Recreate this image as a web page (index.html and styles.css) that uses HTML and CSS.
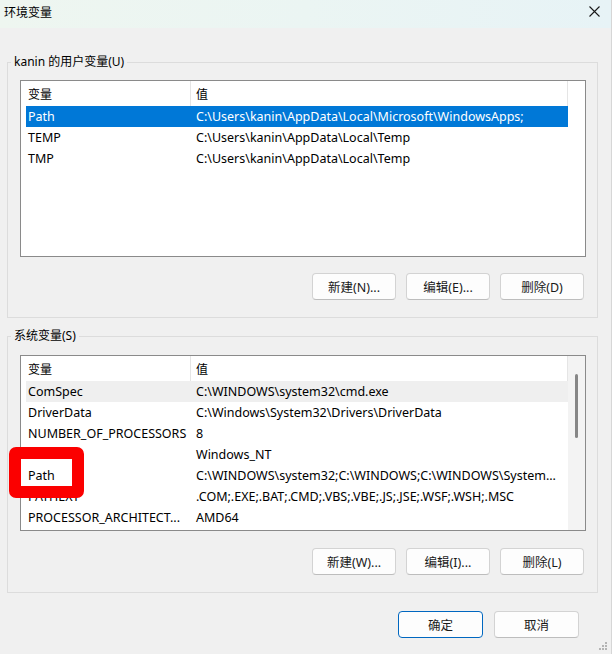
FILE: index.html
```html
<!DOCTYPE html>
<html lang="zh-CN">
<head>
    <meta charset="UTF-8">
    <meta name="viewport" content="width=device-width, initial-scale=1.0">
    <title>环境变量</title>
    <link rel="stylesheet" href="styles.css">
</head>
<body>
    <div class="window">
        <div class="titlebar">
            <span class="title">环境变量</span>
            <svg class="close" width="11" height="11" viewBox="0 0 11 11">
                <path d="M0.5 0.5L10.5 10.5M10.5 0.5L0.5 10.5" stroke="#1a1a1a" stroke-width="1.1" fill="none"/>
            </svg>
        </div>

        <div class="content">
            <fieldset class="group">
                <legend>kanin 的用户变量(U)</legend>
                <div class="listview">
                    <div class="list-inner">
                        <div class="row head"><div class="name">变量</div><div class="value">值</div></div>
                        <div class="row selected"><div class="name">Path</div><div class="value">C:\Users\kanin\AppData\Local\Microsoft\WindowsApps;</div></div>
                        <div class="row"><div class="name">TEMP</div><div class="value">C:\Users\kanin\AppData\Local\Temp</div></div>
                        <div class="row"><div class="name">TMP</div><div class="value">C:\Users\kanin\AppData\Local\Temp</div></div>
                    </div>
                    <div class="gutter"></div>
                </div>
                <div class="actions">
                    <button class="btn">新建(N)...</button>
                    <button class="btn">编辑(E)...</button>
                    <button class="btn">删除(D)</button>
                </div>
            </fieldset>

            <fieldset class="group system">
                <legend>系统变量(S)</legend>
                <div class="listview">
                    <div class="list-inner">
                        <div class="row head"><div class="name">变量</div><div class="value">值</div></div>
                        <div class="row hover"><div class="name">ComSpec</div><div class="value">C:\WINDOWS\system32\cmd.exe</div></div>
                        <div class="row"><div class="name">DriverData</div><div class="value">C:\Windows\System32\Drivers\DriverData</div></div>
                        <div class="row"><div class="name">NUMBER_OF_PROCESSORS</div><div class="value">8</div></div>
                        <div class="row"><div class="name">OS</div><div class="value">Windows_NT</div></div>
                        <div class="row"><div class="name">Path</div><div class="value">C:\WINDOWS\system32;C:\WINDOWS;C:\WINDOWS\System...</div></div>
                        <div class="row"><div class="name">PATHEXT</div><div class="value">.COM;.EXE;.BAT;.CMD;.VBS;.VBE;.JS;.JSE;.WSF;.WSH;.MSC</div></div>
                        <div class="row"><div class="name">PROCESSOR_ARCHITECT...</div><div class="value">AMD64</div></div>
                    </div>
                    <div class="gutter scrollbar"><div class="thumb"></div></div>
                </div>
                <div class="actions">
                    <button class="btn">新建(W)...</button>
                    <button class="btn">编辑(I)...</button>
                    <button class="btn">删除(L)</button>
                </div>
            </fieldset>
        </div>

        <div class="footer">
            <button class="btn default">确定</button>
            <button class="btn">取消</button>
        </div>

        <!-- red highlight drawn over the system list -->
        <div class="mark"></div>

        <svg class="grip" width="9" height="9" viewBox="0 0 9 9">
            <rect x="6" y="0" width="2" height="2" fill="#b4b4b4"/>
            <rect x="3" y="3" width="2" height="2" fill="#b4b4b4"/>
            <rect x="6" y="3" width="2" height="2" fill="#b4b4b4"/>
            <rect x="0" y="6" width="2" height="2" fill="#b4b4b4"/>
            <rect x="3" y="6" width="2" height="2" fill="#b4b4b4"/>
            <rect x="6" y="6" width="2" height="2" fill="#b4b4b4"/>
        </svg>
    </div>
</body>
</html>
```

FILE: styles.css
```css
* {
    box-sizing: border-box;
}
body {
    margin: 0;
    background: #f0f0f0;
    font-family: "Noto Sans", "Noto Sans CJK SC", sans-serif;
    font-size: 12.5px;
    color: #000;
}
.window {
    position: relative;
    width: 612px;
    height: 654px;
    overflow: hidden;
    border-right: 1px solid #d6d6d6;
}
.titlebar {
    height: 28px;
    display: flex;
    justify-content: space-between;
    align-items: flex-start;
    padding: 4px 11px 0 4px;
    background: linear-gradient(90deg, #eef6f0 0%, #ebf5f3 50%, #e7f3f6 100%);
}
.title {
    font-family: "Noto Sans CJK SC", sans-serif;
    font-size: 12px;
    line-height: 16px;
}
.close {
    margin-top: 2px;
}
.content {
    padding-top: 26px;
}
.group {
    margin: 0 13px 0 7px;
    padding: 10px 11px 17px 12px;
    border: 1px solid #dcdcdc;
    border-radius: 0;
}
.group legend {
    padding: 0 3px;
    margin-left: -9px;
    line-height: 16px;
    font-size: 12px;
}
.system {
    margin-top: 10px;
    padding-top: 11px;
}
.listview {
    display: flex;
    height: 177px;
    background: #fff;
    border: 1px solid #8a8a8a;
}
.system .listview {
    height: 176px;
}
.list-inner {
    flex: 1;
    padding-left: 5px;
    min-width: 0;
}
.gutter {
    width: 17px;
}
.scrollbar {
    background: #f3f3f3;
    padding-top: 18px;
}
.thumb {
    width: 3px;
    height: 64px;
    margin-left: 7px;
    border-radius: 2px;
    background: #868686;
}
.row {
    display: flex;
    height: 21px;
    line-height: 21px;
    white-space: nowrap;
}
.row .name {
    width: 164px;
    padding-left: 2px;
    overflow: hidden;
}
.row .value {
    flex: 1;
    padding-left: 6px;
    overflow: hidden;
}
.row.head {
    height: 25px;
    line-height: 26px;
    margin-left: -5px;
    padding-left: 5px;
    border-right: 1px solid #e5e5e5;
}
.row.head .value {
    border-left: 1px solid #e5e5e5;
    padding-left: 5px;
}
.row.head .name, .row.head .value {
    font-family: "Noto Sans CJK SC", sans-serif;
    font-size: 12px;
}
.selected {
    background: #0078d7;
    color: #fff;
}
.hover {
    background: #efefef;
}
.actions {
    display: flex;
    justify-content: flex-end;
    gap: 10px;
    margin-top: 16px;
    padding-right: 2px;
}
.system .actions {
    margin-top: 17px;
}
.btn {
    width: 84px;
    height: 27px;
    padding: 0;
    background: #fdfdfd;
    border: 1px solid #d3d3d3;
    border-bottom-color: #bdbdbd;
    border-radius: 4px;
    font-family: "Noto Sans", "Noto Sans CJK SC", sans-serif;
    font-size: 12.5px;
    color: #1a1a1a;
}
.footer {
    display: flex;
    justify-content: flex-end;
    gap: 11px;
    margin-top: 18px;
    padding-right: 32px;
}
.footer .btn {
    width: 85px;
}
.btn.default {
    border: 1px solid #0067c0;
}
.mark {
    position: absolute;
    left: 9px;
    top: 447px;
    width: 75px;
    height: 51px;
    border: 12px solid #fb0000;
    border-radius: 7px;
}
.grip {
    position: absolute;
    right: 3px;
    bottom: 3px;
}
```
